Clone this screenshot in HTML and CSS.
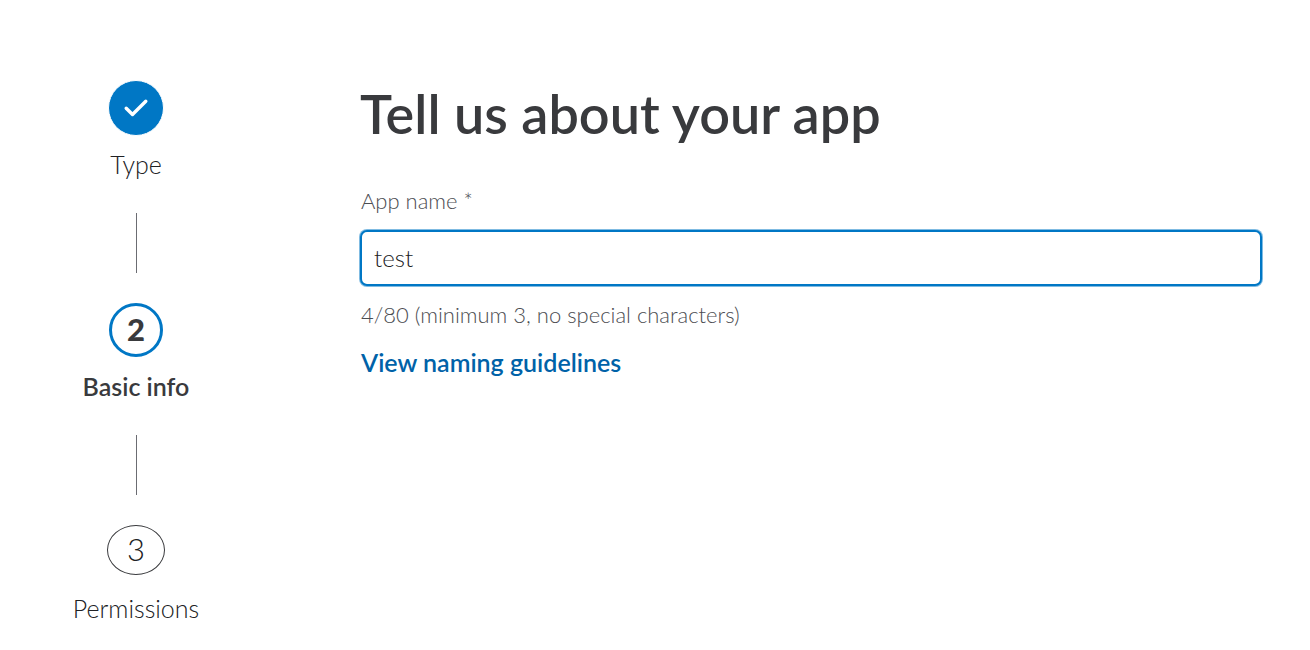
FILE: index.html
```html
<!DOCTYPE html>
<html lang="en">
<head>
<meta charset="utf-8">
<meta name="viewport" content="width=device-width, initial-scale=1">
<title>Tell us about your app</title>
<link rel="stylesheet" href="styles.css">
</head>
<body>
<div class="page">
  <nav aria-label="Progress">
    <ol class="steps">
      <li class="step">
        <span class="marker marker-done"><svg class="check" viewBox="0 0 28 24" aria-hidden="true"><path d="M4.200 12.200L10.500 18.500L23.800 5.200"/></svg></span>
        <span class="label">Type</span>
      </li>
      <li class="step step-current" aria-current="step">
        <span class="marker marker-current">2</span>
        <span class="label">Basic info</span>
      </li>
      <li class="step">
        <span class="marker marker-next">3</span>
        <span class="label">Permissions</span>
      </li>
    </ol>
  </nav>
  <main class="content">
    <h1 class="title">Tell us about your app</h1>
    <form class="form">
      <label class="field-label" for="app-name">App name *</label>
      <input class="field" id="app-name" type="text" value="test" maxlength="80" required aria-describedby="name-hint">
      <p class="hint" id="name-hint">4/80 (minimum 3, no special characters)</p>
      <a class="link" href="#guidelines">View naming guidelines</a>
    </form>
  </main>
</div>
</body>
</html>
```
FILE: styles.css
```css
* { box-sizing: border-box; }
body {
  margin: 0;
  background: #fff;
  color: #393a3d;
  font-family: Lato, "Open Sans", sans-serif;
  font-weight: 300;
}
.page {
  display: grid;
  grid-template-columns: 272px 1fr;
  column-gap: 88px;
  padding: 80px 48px 0 0;
}
.steps {
  margin: 0;
  padding: 0;
  list-style: none;
}
.step {
  display: flex;
  flex-direction: column;
  align-items: center;
  color: #202124;
}
.step + .step::before {
  content: "";
  width: 1px;
  height: 60px;
  margin: 32px 0 29px;
  background: #6b6c72;
}
.marker {
  display: flex;
  align-items: center;
  justify-content: center;
  width: 56px;
  height: 56px;
  border-radius: 50%;
  font-size: 31px;
  line-height: 1;
}
.marker-done { border: 1px solid #fff; background: #0077c5; }
.check {
  width: 28px;
  height: 24px;
  fill: none;
  stroke: #fff;
  stroke-width: 3.4;
  stroke-linecap: round;
  stroke-linejoin: round;
}
.marker-current {
  width: 54px;
  height: 54px;
  margin: 1px;
  padding-bottom: 2px;
  border: 3px solid #0077c5;
  font-weight: 900;
}
.marker-next {
  width: 58px;
  height: 50px;
  margin: 1px 0 5px;
  padding-bottom: 2px;
  border: 1px solid #393a3d;
}
.label {
  margin-top: 11px;
  font-size: 25px;
  line-height: 34px;
}
.step-current { color: #393a3d; }
.step-current .label { font-weight: 600; }
.title {
  margin: 0;
  font-size: 54px;
  font-weight: 600;
  line-height: 68px;
}
.form {
  display: flex;
  flex-direction: column;
  align-items: flex-start;
  margin-top: 39px;
}
.field-label, .hint {
  padding-left: 1px;
  color: #4c4d52;
  font-size: 22px;
  line-height: 28px;
}
.field {
  width: 100%;
  height: 56px;
  margin: 15px 0;
  padding: 0 12px 2px;
  border: 2px solid #0077c5;
  border-radius: 7px;
  outline: none;
  background: #fff;
  box-shadow: 0 0 0 1px #0077c580;
  color: #202124;
  font: inherit;
  font-size: 24px;
}
.hint { margin: 0; }
.link {
  margin-top: 16px;
  padding-left: 1px;
  color: #0062a8;
  font-size: 25px;
  font-weight: 600;
  line-height: 34px;
  text-decoration: none;
}
```
